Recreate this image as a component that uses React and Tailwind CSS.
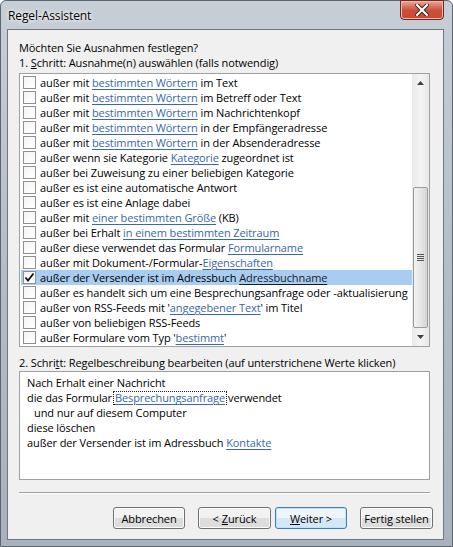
import React from "react";

// rows of the exception list: strings are plain text, {l: ...} are links
const rows = [
  ["außer mit ", { l: "bestimmten Wörtern" }, " im Text"],
  ["außer mit ", { l: "bestimmten Wörtern" }, " im Betreff oder Text"],
  ["außer mit ", { l: "bestimmten Wörtern" }, " im Nachrichtenkopf"],
  ["außer mit ", { l: "bestimmten Wörtern" }, " in der Empfängeradresse"],
  ["außer mit ", { l: "bestimmten Wörtern" }, " in der Absenderadresse"],
  ["außer wenn sie Kategorie ", { l: "Kategorie" }, " zugeordnet ist"],
  ["außer bei Zuweisung zu einer beliebigen Kategorie"],
  ["außer es ist eine automatische Antwort"],
  ["außer es ist eine Anlage dabei"],
  ["außer mit ", { l: "einer bestimmten Größe" }, " (KB)"],
  ["außer bei Erhalt ", { l: "in einem bestimmten Zeitraum" }],
  ["außer diese verwendet das Formular ", { l: "Formularname" }],
  ["außer mit Dokument-/Formular-", { l: "Eigenschaften" }],
  ["außer der Versender ist im Adressbuch ", { l: "Adressbuchname" }],
  ["außer es handelt sich um eine Besprechungsanfrage oder -aktualisierung"],
  ["außer von RSS-Feeds mit '", { l: "angegebener Text" }, "' im Titel"],
  ["außer von beliebigen RSS-Feeds"],
  ["außer Formulare vom Typ '", { l: "bestimmt" }, "'"],
];

const SELECTED = 13;

const CheckBox = ({ checked }) => (
  <div className="w-[13px] h-[13px] shrink-0 border border-[#8f8f8f] bg-gradient-to-br from-[#f4f4f4] to-white flex items-center justify-center">
    {checked && (
      <svg width="11" height="11" viewBox="0 0 11 11">
        <path d="M1.5 5.5 L4 8.5 L9.5 1.5" fill="none" stroke="#111" strokeWidth="1.8" />
      </svg>
    )}
  </div>
);

const Row = ({ parts, index }) => {
  const sel = index === SELECTED;
  return (
    <div className={"h-[15px] flex items-center pl-[2px] whitespace-nowrap overflow-hidden " + (sel ? "bg-[#a9cdf0]" : "")}>
      <CheckBox checked={sel} />
      <span className="ml-[4px]">
        {parts.map((p, i) =>
          typeof p === "string" ? (
            <span key={i}>{p}</span>
          ) : (
            <span key={i} className={"underline underline-offset-2 " + (sel ? "text-[#1a1a2a]" : "text-[#3a68a8]")}>
              {p.l}
            </span>
          )
        )}
      </span>
    </div>
  );
};

const ScrollBar = () => (
  <div className="w-[17px] shrink-0 bg-gradient-to-r from-[#e8e8e8] via-[#f4f4f4] to-[#e8e8e8] flex flex-col">
    <div className="h-[17px] flex items-center justify-center">
      <svg width="7" height="4" viewBox="0 0 7 4">
        <path d="M0 4 L3.5 0 L7 4 Z" fill="#404040" />
      </svg>
    </div>
    <div className="h-[96px]" />
    <div className="h-[141px] mx-[1px] rounded-[2px] border border-[#9b9b9b] bg-gradient-to-r from-[#f2f2f2] via-[#e6e6e6] to-[#d4d4d4] flex items-center justify-center">
      <div className="flex flex-col gap-[1px]">
        <div className="w-[7px] h-[1px] bg-[#555]" />
        <div className="w-[7px] h-[1px] bg-[#555]" />
        <div className="w-[7px] h-[1px] bg-[#555]" />
        <div className="w-[7px] h-[1px] bg-[#555]" />
      </div>
    </div>
    <div className="flex-1 flex items-center justify-center">
      <svg width="7" height="4" viewBox="0 0 7 4">
        <path d="M0 0 L3.5 4 L7 0 Z" fill="#404040" />
      </svg>
    </div>
  </div>
);

const Button = ({ children, primary, w = "w-[72px]" }) => (
  <button
    className={
      w +
      " h-[22px] rounded-[3px] border whitespace-nowrap flex items-center justify-center " +
      (primary
        ? "border-[#3c7fb1] bg-gradient-to-b from-[#eef6fc] from-50% to-[#d5e8f6] to-50% shadow-[inset_0_0_0_1px_#bfe2fb]"
        : "border-[#707070] bg-gradient-to-b from-[#f2f2f2] from-50% to-[#dddddd] to-50% shadow-[inset_0_0_0_1px_#fbfbfb]")
    }
  >
    {children}
  </button>
);

export default function App() {
  return (
    <div className="w-[453px] h-[547px] overflow-hidden font-['Open_Sans',sans-serif] text-[11px] tracking-[-0.1px] text-black leading-[15px]">
      <div className="w-full h-full rounded-t-[6px] border border-[#5c6670] bg-gradient-to-b from-[#c7ced6] via-[#b4bcc5] to-[#a9b2bc] flex flex-col">
        {/* title bar */}
        <div className="h-[28px] shrink-0 flex items-start justify-between">
          <div className="pl-[7px] pt-[7px] text-[12px] text-black [text-shadow:0_0_6px_#ffffff,0_0_3px_#ffffff]">
            Regel-Assistent
          </div>
          <div className="mr-[8px] mt-[-1px] w-[44px] h-[20px] rounded-b-[4px] border border-[#6a2a20] bg-gradient-to-b from-[#e9a99b] via-[#c8513f] to-[#d0452a] flex items-center justify-center shadow-[inset_0_0_0_1px_#f2b9ab]">
            <svg width="14" height="12" viewBox="0 0 14 12">
              <path d="M2 1 L12 11 M12 1 L2 11" stroke="#3a2a2a" strokeWidth="4" strokeLinecap="square" />
              <path d="M2 1 L12 11 M12 1 L2 11" stroke="#ffffff" strokeWidth="2" strokeLinecap="square" />
            </svg>
          </div>
        </div>

        {/* client area */}
        <div className="ml-[6px] w-[437px] h-[511px] border border-[#6d7783] bg-[#f0f0f0] flex flex-col pl-[11px] pr-[10px] pt-[10px]">
          <div className="h-[15px]">Möchten Sie Ausnahmen festlegen?</div>
          <div className="h-[15px]">
            1. <span className="underline">S</span>chritt: Ausnahme(n) auswählen (falls notwendig)
          </div>

          <div className="mt-[3px] w-[411px] h-[274px] border border-[#a0a0a0] bg-white flex">
            <div className="flex-1 pt-[1px] pl-[1px] overflow-hidden">
              {rows.map((r, i) => (
                <Row key={i} parts={r} index={i} />
              ))}
            </div>
            <ScrollBar />
          </div>

          <div className="mt-[8px] h-[15px] whitespace-nowrap">
            2. Schri<span className="underline">t</span>t: Regelbeschreibung bearbeiten (auf unterstrichene Werte klicken)
          </div>

          <div className="mt-[1px] w-[411px] h-[109px] border border-[#a0a0a0] bg-white pt-[3px] pl-[7px]">
            <div>Nach Erhalt einer Nachricht</div>
            <div className="h-[15px]">
              die das Formular
              <span className="inline-block leading-[12px] mx-[1px] px-[1px] border border-dotted border-[#222] text-[#3a68a8] underline underline-offset-2">
                Besprechungsanfrage
              </span>
              verwendet
            </div>
            <div className="pl-[7px]">und nur auf diesem Computer</div>
            <div>diese löschen</div>
            <div>
              außer der Versender ist im Adressbuch{" "}
              <span className="text-[#3a68a8] underline underline-offset-2">Kontakte</span>
            </div>
          </div>

          <div className="mt-[12px] w-[411px] h-[2px] border-t border-[#a0a0a0] border-b border-b-white" />

          <div className="mt-[13px] flex justify-end gap-[13px]">
            <Button>Abbrechen</Button>
            <div className="flex gap-[4px]">
              <Button w="w-[73px]">
                &lt; <span className="underline ml-[3px]">Z</span>urück
              </Button>
              <Button primary>
                <span className="underline">W</span>eiter &gt;
              </Button>
            </div>
            <Button w="w-[73px]">Fertig stellen</Button>
          </div>
        </div>
      </div>
    </div>
  );
}
